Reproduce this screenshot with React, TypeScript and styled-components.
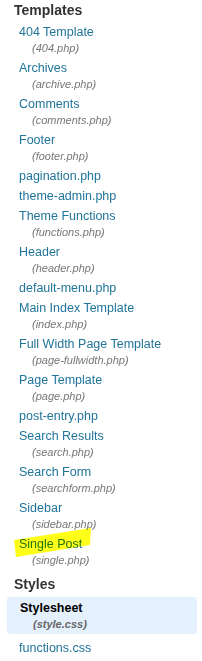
import React from 'react';
import styled, { createGlobalStyle } from 'styled-components';

const GlobalStyle = createGlobalStyle`
  html, body {
    margin: 0;
    padding: 0;
    background: #fff;
  }
  body {
    font-family: "Liberation Sans", Arial, sans-serif;
  }
`;

interface TemplateFile {
  title: string;
  file?: string;
  marked?: boolean;
}

const templates: TemplateFile[] = [
  { title: '404 Template', file: '404.php' },
  { title: 'Archives', file: 'archive.php' },
  { title: 'Comments', file: 'comments.php' },
  { title: 'Footer', file: 'footer.php' },
  { title: 'pagination.php' },
  { title: 'theme-admin.php' },
  { title: 'Theme Functions', file: 'functions.php' },
  { title: 'Header', file: 'header.php' },
  { title: 'default-menu.php' },
  { title: 'Main Index Template', file: 'index.php' },
  { title: 'Full Width Page Template', file: 'page-fullwidth.php' },
  { title: 'Page Template', file: 'page.php' },
  { title: 'post-entry.php' },
  { title: 'Search Results', file: 'search.php' },
  { title: 'Search Form', file: 'searchform.php' },
  { title: 'Sidebar', file: 'sidebar.php' },
  { title: 'Single Post', file: 'single.php', marked: true },
];

const App: React.FC = () => {
  return (
    <>
      <GlobalStyle />
      <Panel>
        <Heading>Templates</Heading>
        <FileList>
          {templates.map((t) => (
            <FileItem key={t.title}>
              <TitleLink href="#">{t.title}</TitleLink>
              {t.file && <FileName>({t.file})</FileName>}
              {t.marked && (
                // marker stroke drawn over the entry
                <Highlight viewBox="0 0 80 31" width="80" height="31">
                  <polygon points="0,13 77,1 76,18 2,30" fill="#ffff1a" />
                </Highlight>
              )}
            </FileItem>
          ))}
        </FileList>

        <Heading $spaced>Styles</Heading>
        <FileList>
          <FileItem $current>
            <TitleLink href="#" $current>Stylesheet</TitleLink>
            <FileName $current>(style.css)</FileName>
          </FileItem>
          <FileItem $after>
            <TitleLink href="#">functions.css</TitleLink>
          </FileItem>
        </FileList>
      </Panel>
    </>
  );
};

const Panel = styled.div`
  width: 202px;
  height: 661px;
  overflow: hidden;
  background: #fff;
`;

const Heading = styled.h3<{ $spaced?: boolean }>`
  margin: ${(props) => (props.$spaced ? '6px 0 0' : '0')};
  padding-left: 14px;
  font-size: 14px;
  line-height: 20px;
  font-weight: bold;
  color: #333;
`;

const FileList = styled.ul`
  list-style: none;
  margin: 0;
  padding: 0 5px 0 7px;
`;

const FileItem = styled.li<{ $current?: boolean; $after?: boolean }>`
  position: relative;
  display: flex;
  flex-direction: column;
  margin-top: ${(props) => (props.$current ? '3px' : props.$after ? '6px' : '4px')};
  padding: ${(props) => (props.$current ? '3px 0 2px 13px' : '0 0 0 12px')};
  background: ${(props) => (props.$current ? '#e4f0fc' : 'transparent')};
  border-radius: 3px;
`;

const TitleLink = styled.a<{ $current?: boolean }>`
  font-size: 12.5px;
  line-height: 16px;
  color: ${(props) => (props.$current ? '#000' : '#21759b')};
  font-weight: ${(props) => (props.$current ? 'bold' : 'normal')};
  text-decoration: none;
  white-space: nowrap;
`;

const FileName = styled.span<{ $current?: boolean }>`
  padding-left: 13px;
  font-size: 11px;
  line-height: 16px;
  font-style: italic;
  font-weight: ${(props) => (props.$current ? 'bold' : 'normal')};
  color: ${(props) => (props.$current ? '#666' : '#777')};
  white-space: nowrap;
`;

const Highlight = styled.svg`
  position: absolute;
  left: 7px;
  top: -9px;
  mix-blend-mode: multiply;
  pointer-events: none;
`;

export default App;
